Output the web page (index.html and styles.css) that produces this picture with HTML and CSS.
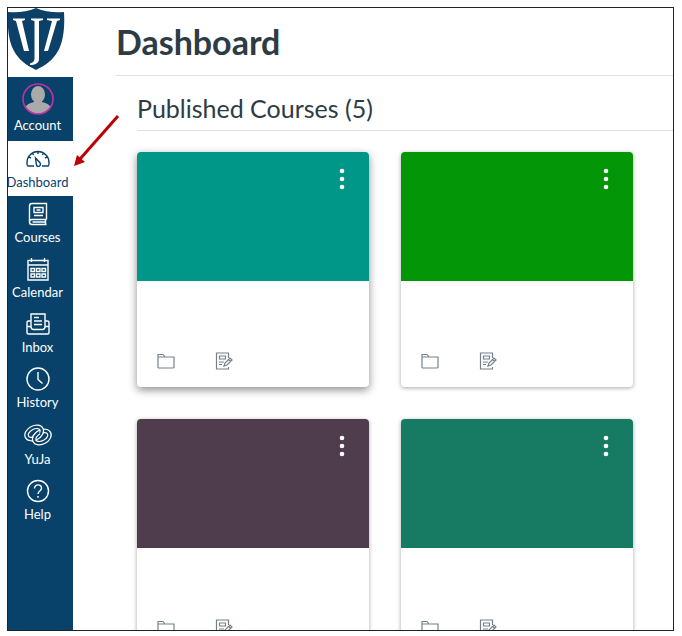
FILE: index.html
```html
<!DOCTYPE html>
<html lang="en">
  <head>
    <meta charset="UTF-8">
    <meta name="viewport" content="width=device-width, initial-scale=1.0">
    <title>Dashboard</title>
    <link rel="stylesheet" href="styles.css">
  </head>
  <body>
    <!-- shared icons -->
    <svg class="icon-defs" width="0" height="0" aria-hidden="true">
      <symbol id="icon-folder" viewBox="0 0 18 16">
        <path d="M1 14V1.500h5l2 2.500h9v10q0 1-1 1H2q-1 0-1-1zM1 4h7" />
      </symbol>
      <symbol id="icon-assignment" viewBox="0 0 18 18">
        <path d="M13.500 6V1H1.500v16h12v-2M4.500 4h6v3h-6zM4 10h5M4 12.500h3" />
        <path d="M9 14l1-3 5-5 2 2-5 5zM13.500 7.500l2 2" />
      </symbol>
      <symbol id="icon-dots" viewBox="0 0 6 22">
        <circle cx="3" cy="3" r="2.300" />
        <circle cx="3" cy="11" r="2.300" />
        <circle cx="3" cy="19" r="2.300" />
      </symbol>
    </svg>

    <div class="frame">
      <nav class="sidebar">
        <a href="#" class="logo" aria-label="Home">
          <svg width="58" height="64" viewBox="0 0 58 64">
            <path fill="#0b4168" d="M28 0C37 4 47 5 56 4C57 21 55 34 50 43C45 52 38 57 28 62C18 57 11 52 6 43C1 34-1 21 0 4C9 5 19 4 28 0z" />
            <path fill="#fff" d="M5 10.500h12v1.500l-3 1 7 30h-5L8 13l-3-1zM39 10.500h13v1.500l-3 1-9 30h-4l8-30-5-1zM23 10.500h12v1.500l-4 1v38c0 4-4 6-9 6v-1.500c3-1 4.500-2 4.500-5.500V13l-3.500-1z" />
          </svg>
        </a>
        <a href="#" class="nav-item account">
          <svg width="32" height="32" viewBox="0 0 32 32">
            <clipPath id="avatar"><circle cx="16" cy="16" r="15" /></clipPath>
            <g clip-path="url(#avatar)" fill="#aaa">
              <ellipse cx="16" cy="11.500" rx="7" ry="8.500" />
              <path d="M12 17h8v2c5 1 8 3 9 6v7H3v-7c1-3 4-5 9-6z" />
            </g>
            <circle cx="16" cy="16" r="15" fill="none" stroke="#c32fa8" stroke-width="1.600" />
          </svg>
          <span>Account</span>
        </a>
        <a href="#" class="nav-item active">
          <svg width="24" height="24" viewBox="0 0 24 24">
            <path d="M8 19H2Q1 19 1 15.500a11 11 0 0 1 22 0q0 3.500-1 3.500h-6M12 4.500v2.500M6.500 6l1 2M17.500 6l-1 2M3 10l2 1M21 10l-2 1" />
            <path d="M9.500 11l4.300 4.500c1.500 2 .2 3.900-1.500 3.900-1.500 0-2-1.200-2-2.400z" />
          </svg>
          <span>Dashboard</span>
        </a>
        <a href="#" class="nav-item">
          <svg width="24" height="24" viewBox="0 0 24 24">
            <path d="M20.500 17.500v-16H6q-2.500 0-2.500 2.500v16Q3.500 22.500 6 22.500h14.500M20.500 17.500H6q-2.500 0-2.500 2.500M19.500 17.500v5M6.500 20h13M8 5.500h9v5H8zM10.500 8h4M8 13.500h9" />
          </svg>
          <span>Courses</span>
        </a>
        <a href="#" class="nav-item">
          <svg width="24" height="24" viewBox="0 0 24 24">
            <path d="M2 3.500h20V23H2zM2 8h20M5.500 1v4M18.500 1v4M5 11.500h3.500v3H5zM10.500 11.500H14v3h-3.500zM16 11.500h3.500v3H16zM5 17h3.500v3H5zM10.500 17H14v3h-3.500zM16 17h3.500v3H16z" />
          </svg>
          <span>Calendar</span>
        </a>
        <a href="#" class="nav-item">
          <svg width="24" height="24" viewBox="0 0 24 24">
            <path d="M5 16V2h14v14M5 9H2.500Q1 9 1 11v9.500Q1 22 2.500 22h19q1.500 0 1.500-1.500V11q0-2-1.500-2H19M1 14.500h4q0 3 2.500 3h9q2.500 0 2.500-3h4M8 5.500h5M8 9h8M8 12.500h8" />
          </svg>
          <span>Inbox</span>
        </a>
        <a href="#" class="nav-item">
          <svg width="24" height="24" viewBox="0 0 24 24">
            <circle cx="12" cy="12" r="11" />
            <path d="M12 5v7.500l4.500 4" />
          </svg>
          <span>History</span>
        </a>
        <a href="#" class="nav-item yuja">
          <!-- two linked rings: wide stroke, then a narrower one in the sidebar colour -->
          <svg width="30" height="26" viewBox="0 0 30 26">
            <g transform="rotate(-28 15 13)">
              <ellipse class="ring" cx="17.400" cy="16.600" rx="8.200" ry="5.400" />
              <ellipse class="ring-gap" cx="17.400" cy="16.600" rx="8.200" ry="5.400" />
              <ellipse class="ring" cx="12.600" cy="9.400" rx="8.200" ry="5.400" />
              <ellipse class="ring-gap" cx="12.600" cy="9.400" rx="8.200" ry="5.400" />
              <path class="ring" d="M9.200 16.600A8.200 5.400 0 0 1 17.400 11.200" />
              <path class="ring-gap" d="M9.200 16.600A8.200 5.400 0 0 1 17.400 11.200" />
            </g>
          </svg>
          <span>YuJa</span>
        </a>
        <a href="#" class="nav-item">
          <svg width="24" height="24" viewBox="0 0 24 24">
            <circle cx="12" cy="12" r="10.500" />
            <path d="M8.500 9.500C8.500 4.500 15.500 5 15.500 9.200c0 2.800-3.500 2.800-3.500 5.800M12 17v1.800" />
          </svg>
          <span>Help</span>
        </a>
      </nav>

      <main class="content">
        <h1>Dashboard</h1>
        <section class="courses">
          <h2>Published Courses (5)</h2>
          <div class="card-grid">
            <article class="card raised">
              <div class="card-header teal">
                <button type="button" aria-label="Course options"><svg width="6" height="22"><use href="#icon-dots" /></svg></button>
              </div>
              <div class="card-actions">
                <a href="#" aria-label="Files"><svg width="18" height="16"><use href="#icon-folder" /></svg></a>
                <a href="#" aria-label="Assignments"><svg width="18" height="18"><use href="#icon-assignment" /></svg></a>
              </div>
            </article>
            <article class="card">
              <div class="card-header green">
                <button type="button" aria-label="Course options"><svg width="6" height="22"><use href="#icon-dots" /></svg></button>
              </div>
              <div class="card-actions">
                <a href="#" aria-label="Files"><svg width="18" height="16"><use href="#icon-folder" /></svg></a>
                <a href="#" aria-label="Assignments"><svg width="18" height="18"><use href="#icon-assignment" /></svg></a>
              </div>
            </article>
            <article class="card">
              <div class="card-header plum">
                <button type="button" aria-label="Course options"><svg width="6" height="22"><use href="#icon-dots" /></svg></button>
              </div>
              <div class="card-actions">
                <a href="#" aria-label="Files"><svg width="18" height="16"><use href="#icon-folder" /></svg></a>
                <a href="#" aria-label="Assignments"><svg width="18" height="18"><use href="#icon-assignment" /></svg></a>
              </div>
            </article>
            <article class="card">
              <div class="card-header pine">
                <button type="button" aria-label="Course options"><svg width="6" height="22"><use href="#icon-dots" /></svg></button>
              </div>
              <div class="card-actions">
                <a href="#" aria-label="Files"><svg width="18" height="16"><use href="#icon-folder" /></svg></a>
                <a href="#" aria-label="Assignments"><svg width="18" height="18"><use href="#icon-assignment" /></svg></a>
              </div>
            </article>
          </div>
        </section>
      </main>

      <!-- arrow pointing at the Dashboard link -->
      <svg class="arrow" width="48" height="54" viewBox="0 0 48 54">
        <path d="M45 2L7 45" stroke="#c00000" stroke-width="3" />
        <path d="M1 52l3-11 8 7z" fill="#c00000" />
      </svg>
    </div>
  </body>
</html>
```
FILE: styles.css
```css
* {
  box-sizing: border-box;
}

body {
  margin: 0;
  padding: 7px 8px 5px 7px;
  height: 100vh;
  background-color: #fff;
  color: #2d3b45;
  font-family: Lato, "Liberation Sans", sans-serif;
}

svg {
  display: block;
}

.icon-defs {
  position: absolute;
}

.frame {
  position: relative;
  display: flex;
  height: 100%;
  border: 1px solid #222;
  overflow: hidden;
}

/* Sidebar */
.sidebar {
  flex: none;
  width: 65px;
  background-color: #08426a;
}

.logo {
  display: block;
  height: 69px;
  background-color: #fff;
}

.nav-item {
  display: flex;
  flex-direction: column;
  align-items: center;
  padding-top: 6px;
  padding-right: 6px;
  height: 55px;
  color: #fff;
  font-size: 13px;
  line-height: 16px;
  text-decoration: none;
}

.nav-item svg {
  flex: none;
  margin-bottom: 3px;
  fill: none;
  stroke: currentColor;
  stroke-width: 1.4;
}

.nav-item.account {
  height: 64px;
}

.account svg {
  margin-bottom: 2px;
  stroke: none;
}

.nav-item.active {
  background-color: #fff;
  color: #08426a;
}

.nav-item.yuja {
  height: 57px;
}

.yuja .ring {
  stroke: #fff;
  stroke-width: 4.6;
}

.yuja .ring-gap {
  stroke: #08426a;
  stroke-width: 2.2;
}

/* Main area */
.content {
  flex: 1;
  min-width: 0;
  padding-left: 43px;
}

h1 {
  margin: 0;
  padding: 12px 0 11px;
  border-bottom: 1px solid #dfe1e3;
  font-size: 34px;
  font-weight: 700;
  line-height: 44px;
}

.courses {
  padding-left: 21px;
}

h2 {
  margin: 0 0 21px;
  padding: 15px 0 5px;
  border-bottom: 1px solid #dfe1e3;
  font-size: 25px;
  font-weight: 400;
  line-height: 34px;
}

.card-grid {
  display: grid;
  grid-template-columns: repeat(auto-fill, 232px);
  gap: 32px;
}

.card {
  height: 235px;
  border-radius: 4px;
  background-color: #fff;
  box-shadow: 0 1px 4px rgba(0, 0, 0, 0.35);
  overflow: hidden;
}

.card.raised {
  box-shadow: 0 3px 8px rgba(0, 0, 0, 0.45);
}

.card-header {
  display: flex;
  justify-content: flex-end;
  align-items: flex-start;
  height: 129px;
  padding: 12px 18px;
}

.card-header button {
  padding: 4px 6px;
  border: 0;
  background: none;
  fill: #fff;
  cursor: pointer;
}

.teal {
  background-color: #009688;
}

.green {
  background-color: #039606;
}

.plum {
  background-color: #4f3d4e;
}

.pine {
  background-color: #177b63;
}

.card-actions {
  display: flex;
  align-items: center;
  gap: 40px;
  padding: 71px 20px 0;
}

.card-actions svg {
  fill: none;
  stroke: #75808a;
  stroke-width: 1.2;
}

.arrow {
  position: absolute;
  top: 106px;
  left: 65px;
}
```
